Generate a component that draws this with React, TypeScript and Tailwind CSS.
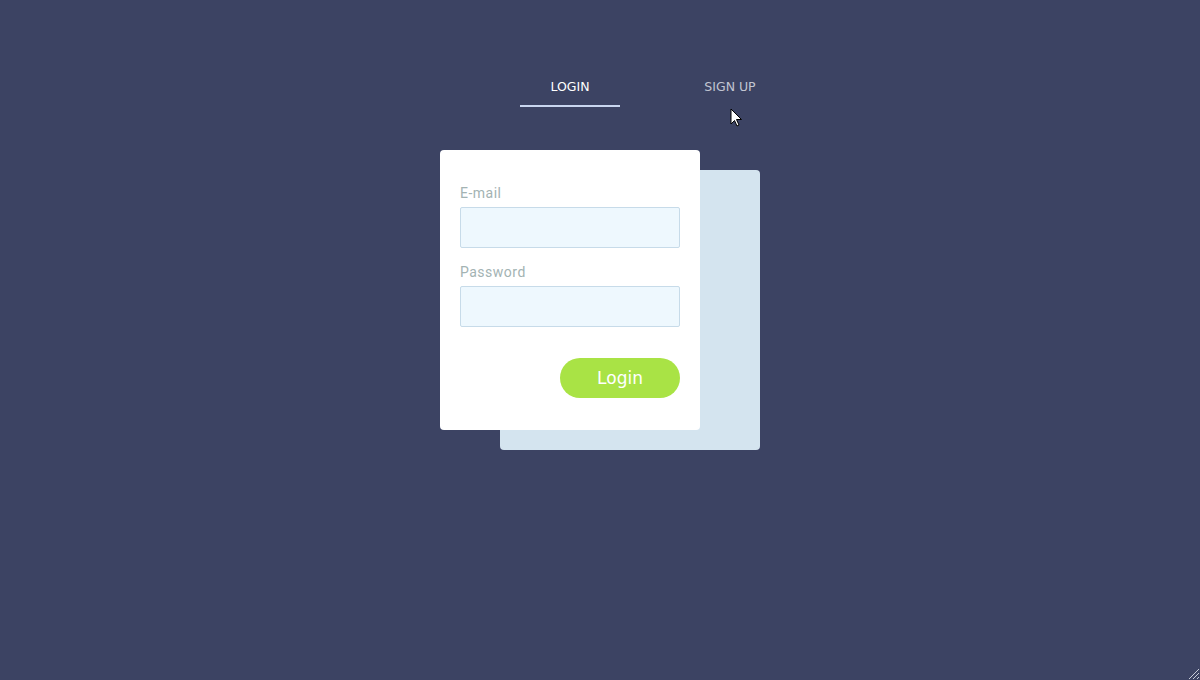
import React from "react";

export default function App() {
  return (
    <div className="relative h-[680px] w-full overflow-hidden bg-[#3c4363] flex flex-col items-center pt-[77px]">
      <div className="w-[260px] ml-[100px] flex gap-[60px]" style={{ fontFamily: '"DejaVu Sans", sans-serif' }}>
        <div className="w-[100px] shrink-0 text-center text-[12.5px] leading-[20px] text-white pb-[8px] border-b-2 border-[#c9d6f0]">LOGIN</div>
        <div className="w-[100px] shrink-0 text-center text-[12.5px] leading-[20px] text-[#c2c6d2] pb-[8px]">SIGN UP</div>
      </div>
      <div className="relative mt-[43px] w-[320px] h-[300px]">
        <div className="absolute left-[60px] top-[20px] w-[260px] h-[280px] rounded-[4px] bg-[#d4e4ef]" />
        <div className="relative w-[260px] h-[280px] rounded-[4px] bg-white px-[20px] pt-[33px] flex flex-col" style={{ fontFamily: 'Roboto, sans-serif' }}>
          <label className="text-[14px] leading-[20px] tracking-[0.5px] text-[#a3b3b3]">E-mail</label>
          <div className="mt-[4px] h-[41px] w-[220px] border border-[#c7dbe9] bg-[#eef8fe] rounded-[2px]" />
          <label className="mt-[14px] text-[14px] leading-[20px] tracking-[0.5px] text-[#a3b3b3]">Password</label>
          <div className="mt-[4px] h-[41px] w-[220px] border border-[#c7dbe9] bg-[#eef8fe] rounded-[2px]" />
          <div className="mt-[31px] flex justify-end">
            <button className="w-[120px] h-[40px] pt-[2px] rounded-full bg-[#a9e345] text-white text-[17px]" style={{ fontFamily: '"DejaVu Sans", sans-serif' }}>Login</button>
          </div>
        </div>
      </div>
      <svg className="absolute left-[730px] top-[108px]" width="14" height="20" viewBox="0 0 14 20">
        <path d="M1 1 L1 16 L4.5 12.5 L7 18 L9 17 L6.5 11.5 L11.5 11.5 Z" fill="#fff" stroke="#000" strokeWidth="1" strokeLinejoin="miter" />
      </svg>
      <svg className="absolute right-0 bottom-0" width="14" height="14" viewBox="0 0 14 14">
        <path d="M13 3 L3 13 M13 7 L7 13 M13 11 L11 13" stroke="#c8ccd8" strokeWidth="1" />
      </svg>
    </div>
  );
}
